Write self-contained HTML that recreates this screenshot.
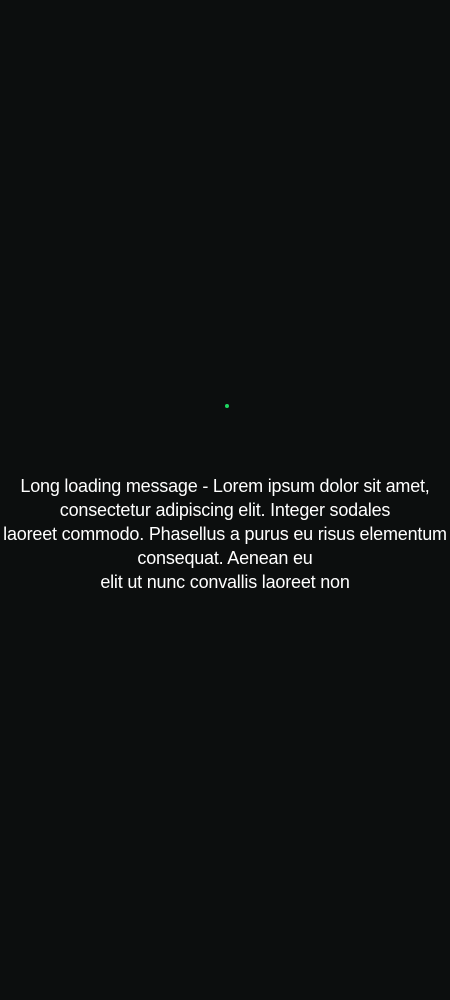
<!DOCTYPE html>
<html><head><style>
html,body{margin:0;padding:0;background:#0c0e0e;width:450px;height:1000px;overflow:hidden}
.dot{position:absolute;left:225px;top:404px;width:4px;height:4px;border-radius:50%;background:#1ed760}
.msg{position:absolute;left:-20px;width:490px;top:474px;text-align:center;color:#fff;font-family:"Liberation Sans",sans-serif;font-size:18px;line-height:24px;white-space:nowrap;letter-spacing:-0.2px}
</style></head><body>
<div class="dot"></div>
<div class="msg">Long loading message - Lorem ipsum dolor sit amet,<br>consectetur adipiscing elit. Integer sodales<br>laoreet commodo. Phasellus a purus eu risus elementum<br>consequat. Aenean eu<br>elit ut nunc convallis laoreet non</div>
</body></html>
